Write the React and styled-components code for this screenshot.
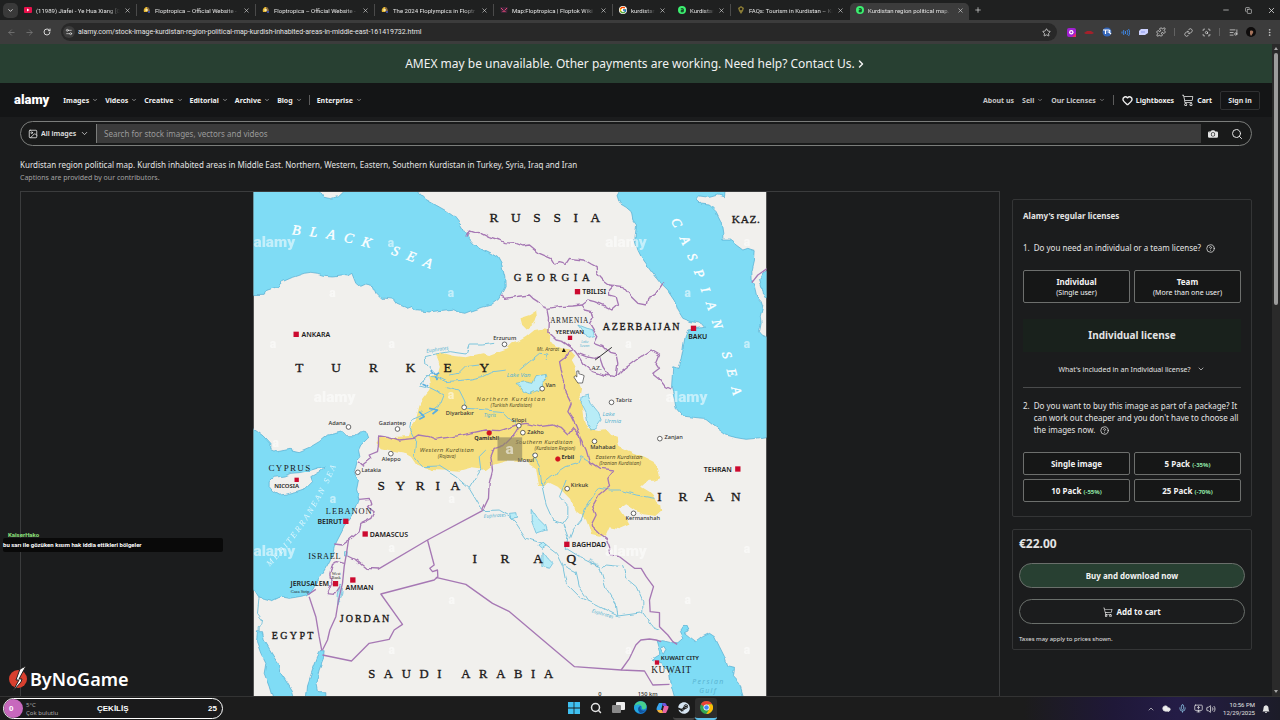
import styled, { createGlobalStyle, css } from 'styled-components';
import {
  ArrowLeft,
  ArrowRight,
  ChevronDown,
  ChevronRight,
  ChevronUp,
  CircleHelp,
  Cloud,
  Copy,
  Heart,
  Image as ImageIcon,
  Link as LinkIcon,
  ListMusic,
  Mic,
  Minus,
  MonitorUp,
  MoreVertical,
  Plus,
  Puzzle,
  RotateCw,
  ScanSearch,
  Search,
  Settings2,
  Star,
  Volume2,
  X,
} from 'lucide-react';
import { BsBellFill, BsCameraFill, BsCart3 } from 'react-icons/bs';
import { FcGoogle } from 'react-icons/fc';
import { FaSteam } from 'react-icons/fa';

const GlobalStyle = createGlobalStyle`
  * {
    box-sizing: border-box;
  }

  body {
    margin: 0;
    background-color: #1b1c1d;
    color: #e4e4e4;
    font-family: 'Noto Sans', 'Open Sans', sans-serif;
    font-size: 7px;
    overflow: hidden;
  }

  button, input, select {
    font: inherit;
    color: inherit;
    background: none;
    border: none;
    padding: 0;
    margin: 0;
    outline: none;
  }

  a {
    color: inherit;
    text-decoration: none;
  }

  svg {
    display: block;
    flex-shrink: 0;
  }
`;

const tabs = [
  { title: '(11989) Jiafei - Ye Hua Xiang [O', icon: 'youtube', line: true },
  { title: 'Floptropica – Official Website -', icon: 'flop', line: true },
  { title: 'Floptropica – Official Website -', icon: 'flop', line: true },
  { title: 'The 2024 Floplympics in Floptr', icon: 'flop', line: true },
  { title: 'Map:Floptropica | Floptok Wiki', icon: 'wiki', line: true },
  { title: 'kurdistan', icon: 'google', small: true },
  { title: 'Kurdistan', icon: 'alamy', small: true, line: true },
  { title: 'FAQs: Tourism in Kurdistan – Ku', icon: 'faq' },
  { title: 'Kurdistan region political map.', icon: 'alamy', active: true },
];

const leftNav = ['Images', 'Videos', 'Creative', 'Editorial', 'Archive', 'Blog'];

const packs = [
  { name: 'Single image' },
  { name: '5 Pack', off: '(-35%)' },
  { name: '10 Pack', off: '(-55%)' },
  { name: '25 Pack', off: '(-70%)' },
];

const seas = [
  // Black Sea
  'M-30,-30 L203,-30 L203,6 L215,22 L235,26 L255,20 L270,6 L270,-30 L497,-30 L497,6 L520,28 L550,45 L580,62 L605,80 L625,105 L640,130 L648,143 L665,162 L690,178 L715,190 L735,202 L748,225 L757,262 L758,290 L745,315 L738,328 L715,345 L690,352 L660,362 L640,370 L620,366 L600,358 L560,362 L530,366 L490,362 L478,350 L465,355 L435,342 L425,328 L400,325 L385,325 L370,310 L362,290 L340,285 L325,292 L310,280 L298,250 L285,258 L265,255 L240,258 L215,256 L195,250 L175,247 L155,250 L120,262 L90,275 L75,290 L40,302 L32,316 L-30,318 Z',
  // Caspian Sea
  'M1112,-20 L1093,15 L1101,40 L1121,52 L1136,65 L1141,90 L1152,105 L1149,130 L1147,150 L1156,180 L1166,200 L1191,235 L1226,280 L1246,300 L1266,330 L1276,360 L1291,385 L1316,395 L1346,400 L1356,412 L1330,416 L1306,420 L1298,440 L1294,460 L1291,480 L1286,505 L1276,535 L1261,530 L1259,560 L1257,595 L1266,625 L1271,655 L1291,678 L1321,682 L1356,685 L1381,705 L1421,735 L1451,743 L1481,748 L1511,745 L1570,735 L1570,445 L1541,440 L1529,435 L1521,425 L1526,400 L1523,380 L1531,350 L1526,335 L1513,320 L1506,290 L1499,275 L1498,245 L1506,210 L1508,182 L1486,175 L1471,180 L1451,165 L1431,150 L1411,150 L1411,130 L1406,95 L1391,65 L1371,45 L1346,42 L1331,28 L1341,18 L1371,22 L1396,15 L1416,20 L1421,-20 Z',
  'M1560,235 L1535,248 L1521,268 L1528,290 L1533,315 L1560,340 Z',
  // Mediterranean
  'M-30,710 L3,715 L15,722 L35,738 L55,760 L55,776 L75,785 L110,778 L140,785 L175,770 L200,755 L225,735 L250,730 L270,725 L285,740 L305,740 L325,725 L340,728 L346,745 L325,765 L318,780 L322,800 L315,810 L310,830 L305,845 L318,870 L312,900 L320,930 L310,955 L295,980 L280,1000 L268,1025 L255,1050 L245,1070 L240,1095 L225,1125 L210,1150 L195,1175 L180,1200 L165,1215 L140,1220 L110,1225 L85,1220 L60,1232 L35,1225 L15,1220 L3,1200 L-30,1190 Z',
  // Gulf of Suez and Aqaba
  'M15,1325 L30,1325 L35,1350 L50,1375 L65,1400 L80,1420 L85,1450 L105,1480 L120,1505 L130,1540 L65,1540 L50,1490 L35,1450 L40,1420 L25,1390 L12,1355 Z',
  'M205,1382 L215,1382 L212,1410 L200,1440 L190,1480 L195,1505 L220,1505 L220,1540 L160,1540 L165,1485 L180,1440 L195,1400 Z',
  // Persian Gulf
  'M1211,1355 L1231,1352 L1256,1358 L1276,1358 L1291,1345 L1281,1325 L1291,1310 L1306,1308 L1312,1320 L1296,1328 L1311,1340 L1331,1355 L1351,1340 L1371,1330 L1386,1340 L1401,1370 L1416,1400 L1426,1430 L1446,1435 L1443,1460 L1461,1480 L1479,1540 L1271,1540 L1256,1485 L1251,1450 L1230,1420 L1196,1408 L1222,1392 Z',
];

const kurdistan = [
  'M550,490 L565,488 L600,497 L640,502 L665,495 L690,490 L710,495 L735,485 L765,475 L780,460 L796,455 L821,440 L846,420 L876,415 L893,420 L889,452 L905,462 L926,475 L951,478 L966,495 L955,510 L966,530 L971,560 L986,595 L981,620 L991,650 L996,690 L1006,715 L1036,720 L1061,718 L1076,735 L1096,740 L1098,765 L1111,775 L1146,790 L1176,800 L1206,815 L1216,835 L1223,865 L1206,872 L1186,872 L1166,890 L1191,905 L1201,915 L1211,935 L1223,945 L1226,965 L1211,978 L1166,972 L1121,943 L1101,958 L1116,980 L1126,995 L1131,1005 L1101,1018 L1071,1012 L1061,1035 L1041,1040 L1016,1035 L1009,1012 L1001,990 L986,975 L966,960 L956,930 L936,910 L916,890 L891,878 L861,888 L856,870 L853,850 L851,835 L836,825 L821,812 L801,815 L760,814 L720,825 L700,840 L660,835 L620,845 L580,842 L540,840 L510,830 L490,822 L475,800 L460,792 L420,785 L385,778 L372,762 L382,735 L410,742 L470,738 L475,715 L490,690 L500,650 L510,625 L530,600 L535,585 L530,560 L560,548 L565,530 L555,505 Z',
  'M801,385 L831,375 L851,362 L853,380 L846,400 L821,420 L806,405 Z',
];

const islands = [
  'M50,875 L65,862 L95,858 L115,850 L140,848 L170,842 L200,833 L218,830 L200,845 L175,860 L180,875 L160,895 L130,905 L100,912 L80,915 L60,902 L50,890 Z',
  'M1233,1365 L1240,1375 L1232,1390 L1224,1376 Z',
];

const lakes = [
  'M791,580 L816,575 L841,580 L851,560 L881,553 L883,565 L866,580 L871,595 L846,605 L831,612 L811,605 L801,592 Z',
  'M989,620 L1006,615 L1016,640 L1036,665 L1046,690 L1031,710 L1016,720 L1006,700 L1001,670 L986,640 Z',
  'M976,405 L1001,415 L1021,420 L1026,440 L1006,445 L991,425 Z',
  'M836,955 L856,985 L876,1005 L881,1020 L851,1030 L836,990 Z',
  'M871,1085 L886,1105 L901,1120 L891,1135 L871,1130 Z',
  'M859,1065 L871,1058 L881,1068 L869,1075 Z',
  'M771,970 L790,968 L792,982 L775,984 Z',
  'M262,1185 L270,1190 L268,1215 L256,1245 L257,1215 Z',
  'M276,1085 L284,1085 L284,1098 L276,1098 Z',
];

const roughBorders = [
  'M640,143 L650,123 L665,128 L685,127 L710,140 L740,150 L755,158 L791,160 L811,168 L831,165 L861,190 L896,205 L906,222 L921,215 L941,220 L951,205 L996,210 L1016,222 L1031,230 L1033,250 L1051,270 L1071,285 L1111,290 L1136,320 L1156,340 L1181,345 L1186,325 L1211,310 L1231,280',
  'M745,318 L760,325 L791,320 L831,315 L841,325 L856,335 L871,350 L886,355 L921,350 L961,348 L986,345 L1006,330 L1026,335 L1061,350 L1081,360 L1098,345 L1091,320 L1071,315 L1071,300 L1086,285',
  'M886,355 L891,380 L889,430 L911,450 L931,455 L961,475 L976,495 L991,520 L1021,545 L1051,555 L1091,560 L1111,540 L1151,510 L1196,480 L1221,495 L1211,520 L1221,535 L1201,550 L1226,570 L1241,590 L1256,597',
  'M986,345 L996,360 L1016,365 L1021,385 L1011,400 L1026,425 L1036,440 L1026,460 L1051,470 L1071,490 L1091,495 L1096,520 L1091,558',
  'M976,490 L1001,500 L1026,505 L1041,500 L1051,530 L1061,545 L1071,560',
  'M961,480 L949,485 L941,500 L921,515 L926,540 L936,570 L936,600 L956,640 L946,665 L956,680 L971,710 L984,745 L1001,780 L1011,815 L1041,835 L1086,840 L1066,865 L1071,890 L1041,915 L1021,950 L1031,975 L1016,1005 L1041,1030 L1061,1045 L1071,1070 L1074,1095 L1101,1100',
  'M320,815 L330,825 L355,805 L350,795 L375,785 L378,765 L378,735 L410,740 L440,750 L485,745 L500,735 L530,740 L550,748 L600,740 L650,730 L700,720 L740,722 L771,712 L791,705 L821,700 L861,710 L901,705 L926,715 L946,735 L961,715 L981,735 L986,770',
  'M800,712 L785,735 L755,765 L725,775 L715,800 L720,840 L710,880 L708,925 L690,962',
  'M320,928 L350,925 L355,940 L345,950 L365,965 L355,985 L325,1000 L320,1025 L290,1050 L270,1065 L245,1062',
  'M285,1098 L310,1110 L340,1135 L380,1137',
  'M275,1120 L255,1115 L240,1120 L232,1155 L238,1180 L224,1214 L245,1216 L262,1190',
];

const straightBorders = [
  'M690,962 L525,1050 L376,1138',
  'M288,1050 L282,1090 L275,1130 L270,1180 L258,1230 L250,1280 L232,1320 L225,1350 L210,1380',
  'M165,1215 L190,1198 M170,1220 L190,1280 L200,1340 L208,1382',
  'M210,1395 L297,1413 L350,1360 L410,1348 L425,1320 L450,1303 L385,1212 L545,1170 L556,1160 L555,1140 L540,1145 L532,1135 L545,1125 L525,1050',
  'M550,1162 L640,1183 L720,1240 L771,1265 L871,1350 L966,1430 L1106,1440 L1176,1443 L1201,1485 L1251,1483',
  'M1106,1440 L1131,1405 L1150,1365 L1165,1350 L1191,1347 L1211,1350 L1226,1355',
  'M1101,1100 L1146,1135 L1166,1135 L1181,1160 L1203,1190 L1191,1230 L1193,1265 L1221,1268 L1221,1310 L1246,1335 L1261,1355 L1274,1363',
  'M1498,278 L1516,255 L1545,235',
];

const rivers = [
  'M725,460 L690,465 L650,465 L640,492 L590,485 L550,492 L518,500 L520,520 L540,545 L500,585 L530,592 L575,615 L565,640 L540,660 L500,680 L475,690 L472,715 L490,750 L485,800 L510,830 L560,828 L610,860 L650,895 L690,962 L740,960 L771,978 L791,1000 L821,1045 L871,1060 L911,1090 L931,1130 L941,1180 L981,1220 L1041,1250 L1096,1278 L1171,1268 L1201,1310 L1221,1318',
  'M520,560 L550,560 L580,575 L640,570 L690,560 L720,545 L760,540 M590,555 L620,550 L640,530 L680,525',
  'M580,590 L620,600 L635,630 L645,655 L700,660 L750,665 L775,690 L790,700',
  'M700,780 L680,800 L685,840 L650,895',
  'M840,790 L861,830 L868,885 L881,945 L901,990 L931,1000 L946,1040 L941,1075 L981,1100 L1041,1130 L1061,1195 L1091,1240 L1096,1278',
  'M868,885 L911,850 L941,830 L976,820 L985,800 L1011,815',
  'M941,870 L921,920 L946,950 L946,980 L931,1000',
  'M951,1045 L961,1020 L986,990 L1001,950 L1031,905 L1041,895 L1071,900 L1101,900 L1151,915 L1206,925',
  'M1051,1135 L1061,1125 L1111,1130 L1121,1165 L1151,1190 L1171,1235 L1171,1268',
  'M931,1125 L971,1145 L981,1190 L1011,1235',
  'M801,540 L831,515 L861,490 L886,492 L881,510',
  'M20,1220 L15,1270 L30,1290 L28,1305 L20,1310 L20,1325',
];

const countries = [
  { text: 'RUSSIA', x: 711, y: 95, size: 40, space: 38 },
  { text: 'KAZ.', x: 1438, y: 100, size: 34, space: 2 },
  { text: 'GEORGIA', x: 784, y: 274, size: 32, space: 14 },
  { text: 'ARMENIA', x: 893, y: 398, size: 22, space: 2 },
  { text: 'AZERBAIJAN', x: 1051, y: 419, size: 30, space: 5 },
  { text: 'AZ.', x: 1016, y: 540, size: 20, space: 0 },
  { text: 'TURKEY', x: 128, y: 545, size: 40, space: 84 },
  { text: 'SYRIA', x: 375, y: 901, size: 40, space: 32 },
  { text: 'IRAQ', x: 660, y: 1119, size: 40, space: 71 },
  { text: 'IRAN', x: 1214, y: 934, size: 40, space: 51 },
  { text: 'SAUDI ARABIA', x: 347, y: 1464, size: 38, space: 26 },
  { text: 'JORDAN', x: 262, y: 1295, size: 30, space: 6 },
  { text: 'EGYPT', x: 58, y: 1347, size: 30, space: 7 },
  { text: 'LEBANON', x: 220, y: 973, size: 25, space: 3 },
  { text: 'ISRAEL', x: 167, y: 1108, size: 25, space: 2 },
  { text: 'CYPRUS', x: 48, y: 842, size: 27, space: 4 },
  { text: 'KUWAIT', x: 1196, y: 1450, size: 28, space: 2 },
];

const capitals = [
  { text: 'ANKARA', x: 147, y: 441, px: 131, py: 433 },
  { text: 'TBILISI', x: 989, y: 313, px: 975, py: 305 },
  { text: 'YEREWAN', x: 909, y: 433, px: 952, py: 443, small: true },
  { text: 'BAKU', x: 1307, y: 446, px: 1323, py: 415 },
  { text: 'NICOSIA', x: 65, y: 894, px: 132, py: 869, small: true },
  { text: 'BEIRUT', x: 195, y: 1002, px: 280, py: 994 },
  { text: 'DAMASCUS', x: 352, y: 1040, px: 338, py: 1032 },
  { text: 'JERUSALEM', x: 114, y: 1188, px: 249, py: 1181 },
  { text: 'AMMAN', x: 279, y: 1199, px: 301, py: 1170 },
  { text: 'BAGHDAD', x: 958, y: 1070, px: 943, py: 1063 },
  { text: 'TEHRAN', x: 1354, y: 845, px: 1456, py: 837 },
  { text: 'KUWAIT CITY', x: 1225, y: 1411, px: 1213, py: 1417, small: true },
];

const towns = [
  { text: 'Erzurum', x: 722, y: 451, px: 756, py: 463 },
  { text: 'Diyarbakır', x: 580, y: 676, px: 635, py: 652 },
  { text: 'Adana', x: 228, y: 706, px: 288, py: 711 },
  { text: 'Gaziantep', x: 379, y: 706, px: 435, py: 717 },
  { text: 'Aleppo', x: 388, y: 814, px: 415, py: 791 },
  { text: 'Latakia', x: 327, y: 845, px: 316, py: 847 },
  { text: 'Van', x: 879, y: 592, px: 869, py: 596 },
  { text: 'Tabriz', x: 1090, y: 637, px: 1077, py: 637 },
  { text: 'Zanjan', x: 1236, y: 746, px: 1222, py: 746 },
  { text: 'Silopi', x: 777, y: 696, px: 799, py: 707 },
  { text: 'Zakho', x: 824, y: 732, px: 811, py: 728 },
  { text: 'Mahabad', x: 1013, y: 778, px: 1026, py: 754 },
  { text: 'Mosul', x: 795, y: 816, px: 848, py: 796 },
  { text: 'Kirkuk', x: 955, y: 890, px: 944, py: 896 },
  { text: 'Kermanshah', x: 1119, y: 991, px: 1143, py: 970 },
  { text: 'Qamishli', x: 665, y: 751, px: 710, py: 729, main: true },
  { text: 'Erbil', x: 927, y: 806, px: 916, py: 807, main: true },
];

const regions = [
  { text: 'Northern Kurdistan', x: 672, y: 633, size: 18, space: 3 },
  { text: '(Turkish Kurdistan)', x: 714, y: 650, size: 15 },
  { text: 'Western Kurdistan', x: 502, y: 786, size: 18, space: 1 },
  { text: '(Rojava)', x: 556, y: 804, size: 15 },
  { text: 'Southern Kurdistan', x: 789, y: 762, size: 18, space: 1 },
  { text: '(Kurdistan Region)', x: 846, y: 781, size: 15 },
  { text: 'Eastern Kurdistan', x: 1029, y: 807, size: 18 },
  { text: '(Iranian Kurdistan)', x: 1040, y: 826, size: 15 },
  { text: 'Mt. Ararat', x: 853, y: 483, size: 15 },
];

const waters = [
  { text: 'Lake Van', x: 763, y: 562, size: 18 },
  { text: 'Lake', x: 1050, y: 679, size: 18 },
  { text: 'Urmia', x: 1056, y: 699, size: 18 },
  { text: 'Lake', x: 986, y: 458, size: 11 },
  { text: 'Sevan', x: 982, y: 470, size: 11 },
  { text: 'Euphrates', x: 522, y: 488, size: 15, turn: -8 },
  { text: 'Euphrates', x: 694, y: 984, size: 15, turn: -4 },
  { text: 'Euphrates', x: 1017, y: 1267, size: 15, turn: 16 },
  { text: 'Tigris', x: 694, y: 682, size: 15 },
  { text: 'Tigris', x: 1005, y: 1112, size: 15, turn: 35 },
  { text: 'Persian', x: 1319, y: 1481, size: 21, space: 4 },
  { text: 'Gulf', x: 1340, y: 1510, size: 21, space: 4 },
];

const watermarks = [
  [3, 172],
  [1058, 172],
  [184, 635],
  [1240, 635],
  [3, 1097],
  [1058, 1097],
];

const smallMarks = [
  [406, 170], [230, 320], [586, 322], [1296, 322], [52, 473], [408, 473], [1118, 473],
  [1474, 473], [586, 628], [232, 938], [588, 938], [408, 1086], [1474, 1090],
  [588, 1242], [1296, 1242], [408, 1392], [1118, 1392], [1474, 1392], [1474, 168], [60, 772],
];

const TabIcon = ({ type }) => {
  if (type === 'google') return <Favicon as={FcGoogle} $round />;
  if (type === 'youtube') {
    return (
      <Favicon viewBox='0 0 8 8'>
        <rect y='1' width='8' height='6' rx='1' fill='#e8124c' />
        <path d='M3 2.6 5.5 4 3 5.4z' fill='#fff' />
      </Favicon>
    );
  }
  if (type === 'alamy') {
    return (
      <Favicon viewBox='0 0 8 8'>
        <circle cx='4' cy='4' r='4' fill='#3cf070' />
        <path d='M2.8 2.8h2.4v3H3.2V4.4h2' fill='none' stroke='#10301b' />
      </Favicon>
    );
  }
  if (type === 'wiki') {
    return (
      <Favicon viewBox='0 0 8 8'>
        <path d='M0 1h8L7 7H1z' fill='#3c2438' />
        <path d='M1 2 3 4M7 2 5 4M3 6V5h2v1' fill='none' stroke='#e04672' />
      </Favicon>
    );
  }
  if (type === 'faq') {
    return (
      <Favicon viewBox='0 0 8 8'>
        <path d='M1 2 4 0l3 2-1 3-2 3-2-3z' fill='#8c7d36' />
        <circle cx='4' cy='3' r='1.3' fill='#262217' />
      </Favicon>
    );
  }
  return (
    <Favicon viewBox='0 0 8 8'>
      <path d='M1 6C0 3 2 1 4 1v5z' fill='#e3b52e' />
      <path d='M4 1c2 0 3 2 3 5H4z' fill='#8d6c3e' />
      <circle cx='3.6' cy='4' r='1.3' fill='#f5e9ad' />
      <path d='M5 5h2v2H5z' fill='#3c4e9b' />
    </Favicon>
  );
};

const BrowserTop = () => (
  <>
    <TabStrip>
      <TabSearch aria-label='Search tabs'>
        <ChevronDown size={7} strokeWidth={3} />
      </TabSearch>
      {tabs.map((tab, i) => (
        <Tab key={i} $small={tab.small} $active={tab.active} $line={tab.line}>
          <TabIcon type={tab.icon} />
          <TabTitle $small={tab.small}>{tab.title}</TabTitle>
          <IconButton aria-label='Close tab'>
            <X size={7} />
          </IconButton>
        </Tab>
      ))}
      <NewTab aria-label='New tab'>
        <Plus size={8} />
      </NewTab>
      <WindowButtons>
        <IconButton aria-label='Minimize'>
          <Minus size={8} />
        </IconButton>
        <IconButton aria-label='Restore'>
          <Copy size={7} />
        </IconButton>
        <IconButton aria-label='Close'>
          <X size={9} />
        </IconButton>
      </WindowButtons>
    </TabStrip>
    <Toolbar>
      <ToolCell $dim aria-label='Back'>
        <ArrowLeft size={9} />
      </ToolCell>
      <ToolCell $dim aria-label='Forward'>
        <ArrowRight size={9} />
      </ToolCell>
      <ToolCell aria-label='Reload'>
        <RotateCw size={8} strokeWidth={3} />
      </ToolCell>
      <AddressBar>
        <SiteInfo>
          <Settings2 size={8} />
        </SiteInfo>
        <AddressInput
          aria-label='Address'
          defaultValue='alamy.com/stock-image-kurdistan-region-political-map-kurdish-inhabited-areas-in-middle-east-161419732.html'
        />
        <Star size={9} />
      </AddressBar>
      <ToolCell aria-label='Extension'>
        <svg width='9' height='9' viewBox='0 0 9 9'>
          <rect width='9' height='9' rx='2' fill='#a020d0' />
          <path d='M5 9h4V5z' fill='#e62b6a' />
          <circle cx='4.3' cy='4.3' r='2.2' fill='#fff' />
          <circle cx='4.3' cy='4.3' r='1' fill='#a020d0' />
        </svg>
      </ToolCell>
      <ToolCell aria-label='Extension'>
        <svg width='10' height='5' viewBox='0 0 10 5'>
          <path d='M0 3 3 1h4l3 2-2 1H2z' fill='#a3202b' />
        </svg>
      </ToolCell>
      <ToolCell aria-label='Extension'>
        <svg width='10' height='10' viewBox='0 0 10 10'>
          <circle cx='5' cy='5' r='4.5' fill='#3365b8' />
          <path d='M1 3h5M3.5 3v4M5 3h2l1 1-1 1H5.5M7 5l2 2' fill='none' stroke='#fff' strokeWidth='1.2' />
        </svg>
      </ToolCell>
      <ToolCell aria-label='Extension'>
        <svg width='9' height='9' viewBox='0 0 9 9' fill='none' stroke='#3f86e0'>
          <path d='M1 3.5v2M2.7 2v5M4.5 3v3M6 2c1 1.5 1 3.5 0 5M7.5 1c1.5 2 1.5 5 0 7' />
        </svg>
      </ToolCell>
      <ToolCell aria-label='Extension'>
        <svg width='9' height='8' viewBox='0 0 9 8'>
          <path d='M2 1h7v4L6 7H0V3z' fill='#ccd2ff' />
          <path d='M2.5 4h4' stroke='#5262d6' strokeDasharray='1 1' />
        </svg>
      </ToolCell>
      <ToolCell aria-label='Extensions'>
        <Puzzle size={10} />
      </ToolCell>
      <ToolLine />
      <ToolCell aria-label='Copy link'>
        <LinkIcon size={9} />
      </ToolCell>
      <ToolCell aria-label='Search with lens'>
        <ScanSearch size={9} />
      </ToolCell>
      <ToolLine />
      <ToolCell aria-label='Media'>
        <ListMusic size={9} />
      </ToolCell>
      <ToolCell aria-label='Profile'>
        <svg width='10' height='10' viewBox='0 0 10 10'>
          <circle cx='5' cy='5' r='5' fill='#0e0c0c' />
          <path d='M4 4c2-1 4 0 3 2L5 9 4 7z' fill='#a5735b' />
        </svg>
      </ToolCell>
      <ToolCell aria-label='Menu'>
        <MoreVertical size={9} />
      </ToolCell>
    </Toolbar>
  </>
);

const SiteHeader = () => (
  <>
    <Banner href='#contact'>
      AMEX may be unavailable. Other payments are working. Need help? Contact Us.
      <ChevronRight size={12} strokeWidth={3} />
    </Banner>
    <NavBar>
      <Logo href='#home'>alamy</Logo>
      <NavGroup>
        {leftNav.map((item) => (
          <NavItem href='#nav' key={item}>
            {item}
            <ChevronDown size={6} />
          </NavItem>
        ))}
        <NavLine />
        <NavItem href='#nav'>
          Enterprise
          <ChevronDown size={6} />
        </NavItem>
      </NavGroup>
      <NavGroup $right>
        <NavItem href='#nav' $dim>
          About us
        </NavItem>
        <NavItem href='#nav' $dim>
          Sell
          <ChevronDown size={6} />
        </NavItem>
        <NavItem href='#nav' $dim>
          Our Licenses
          <ChevronDown size={6} />
        </NavItem>
        <NavLine />
        <NavItem href='#nav'>
          <Heart size={11} strokeWidth={3} />
          Lightboxes
        </NavItem>
        <NavItem href='#nav'>
          <BsCart3 size={12} />
          Cart
        </NavItem>
        <SignIn>Sign in</SignIn>
      </NavGroup>
    </NavBar>
    <SearchBar>
      <TypePicker>
        <ImageIcon size={10} />
        <TypeSelect aria-label='Type of image'>
          <option>All images</option>
        </TypeSelect>
        <ChevronDown size={9} />
      </TypePicker>
      <SearchInput
        aria-label='Search'
        placeholder='Search for stock images, vectors and videos'
      />
      <SearchButton aria-label='Search by image'>
        <BsCameraFill size={10} />
      </SearchButton>
      <SearchButton aria-label='Search'>
        <Search size={12} />
      </SearchButton>
    </SearchBar>
  </>
);

const MapDrawing = () => (
  <MapSvg viewBox='3 6 1539 1512' preserveAspectRatio='xMidYMin meet'>
    <defs>
      <filter id='coast' x='-5%' y='-5%' width='110%' height='110%'>
        <feTurbulence type='fractalNoise' baseFrequency='0.04' numOctaves='1' seed='4' />
        <feDisplacementMap in='SourceGraphic' scale='14' xChannelSelector='R' yChannelSelector='G' />
      </filter>
      <clipPath id='sheet'>
        <rect x='3' y='6' width='1539' height='1512' />
      </clipPath>
      <path id='blackSea' d='M118,133 Q350,150 600,266' />
      <path id='caspianSea' d='M1255,92 Q1375,330 1455,670' />
      <path id='medSea' d='M52,1130 Q200,980 275,765' />
    </defs>
    <g clipPath='url(#sheet)'>
      <rect x='3' y='6' width='1539' height='1512' fill='#f1f0ed' />
      <g filter='url(#coast)' strokeLinejoin='round'>
        <g fill='#7fdcf5' stroke='#4fa9cf' strokeWidth='2'>
          {seas.map((d) => (
            <path key={d} d={d} />
          ))}
        </g>
        {islands.map((d) => (
          <path key={d} d={d} fill='#f1f0ed' stroke='#4fa9cf' strokeWidth='2' />
        ))}
        {kurdistan.map((d) => (
          <path key={d} d={d} fill='#f6e081' />
        ))}
        <g fill='none' stroke='#7cc4dc' strokeWidth='3'>
          {rivers.map((d) => (
            <path key={d} d={d} />
          ))}
        </g>
        <path
          d='M535,540 550,555 560,548 M545,560 555,570 M510,580 530,588 M500,665 515,680 500,688 M530,655 555,660 540,672'
          fill='none'
          stroke='#5aaee0'
          strokeWidth='5'
        />
        <g fill='#b8ecf7' stroke='#5ab4d4' strokeWidth='2'>
          {lakes.map((d) => (
            <path key={d} d={d} />
          ))}
        </g>
        <g fill='none' stroke='#a678b4' strokeWidth='4'>
          {roughBorders.map((d) => (
            <path key={d} d={d} />
          ))}
        </g>
      </g>
      <g fill='none' stroke='#a678b4' strokeWidth='4' strokeLinejoin='round'>
        {straightBorders.map((d) => (
          <path key={d} d={d} />
        ))}
      </g>
      <path d='M1028,510 L1078,472' stroke='#333' strokeWidth='3' />

      {watermarks.map(([x, y]) => (
        <Watermark key={`${x}-${y}`} x={x} y={y} $size={46}>
          alamy
        </Watermark>
      ))}
      {smallMarks.map(([x, y]) => (
        <Watermark key={`${x}-${y}`} x={x} y={y} $size={36}>
          a
        </Watermark>
      ))}

      <SeaName $size={42} $space={27}>
        <textPath href='#blackSea'>BLACK SEA</textPath>
      </SeaName>
      <SeaName $size={40} $space={32}>
        <textPath href='#caspianSea'>CASPIAN SEA</textPath>
      </SeaName>
      <SeaName $size={25} $space={7} $faint>
        <textPath href='#medSea'>MEDITERRANEAN SEA</textPath>
      </SeaName>

      {countries.map((c) => (
        <Country key={c.text} x={c.x} y={c.y} $size={c.size} $space={c.space}>
          {c.text}
        </Country>
      ))}
      <Country x='238' y='1154' $size={13}>West</Country>
      <Country x='237' y='1167' $size={13}>Bank</Country>
      <Country x='115' y='1208' $size={13}>Gaza Strip</Country>
      {waters.map((w, i) => (
        <WaterName
          key={i}
          x={w.x}
          y={w.y}
          $size={w.size}
          $space={w.space}
          transform={w.turn ? `rotate(${w.turn} ${w.x} ${w.y})` : undefined}
        >
          {w.text}
        </WaterName>
      ))}
      {regions.map((r) => (
        <Region key={r.text} x={r.x} y={r.y} $size={r.size} $space={r.space}>
          {r.text}
        </Region>
      ))}
      <path d='M934,474 l6,12 h-12 z' fill='#111' />
      {towns.map((t) => (
        <g key={t.text}>
          <circle
            cx={t.px}
            cy={t.py}
            r='7'
            fill={t.main ? '#d2141e' : '#fff'}
            stroke={t.main ? '#d2141e' : '#222'}
            strokeWidth='2'
          />
          <Town x={t.x} y={t.y} $bold={t.main}>
            {t.text}
          </Town>
        </g>
      ))}
      {capitals.map((c) => (
        <g key={c.text}>
          <rect
            x={c.px - (c.small ? 6 : 8)}
            y={c.py - (c.small ? 6 : 8)}
            width={c.small ? 13 : 16}
            height={c.small ? 13 : 16}
            fill='#cc0a2f'
          />
          <Capital x={c.x} y={c.y} $small={c.small}>
            {c.text}
          </Capital>
        </g>
      ))}
      <Town x='1037' y='1519'>0</Town>
      <Town x='1156' y='1519'>150 km</Town>
      <rect x='735' y='742' width='74' height='70' fill='#8d8562' opacity='0.65' />
      <Watermark x='759' y='792' $size={46}>
        a
      </Watermark>
      <path
        d='M973,543 v18 l-5,-4 -4,4 12,18 h14 l5,-22 -6,-3 -5,-1 -5,-2 v-8 z'
        fill='#fff'
        stroke='#333'
        strokeWidth='2'
      />
    </g>
  </MapSvg>
);

const Sidebar = () => (
  <Side>
    <Card>
      <CardHeading>Alamy's regular licenses</CardHeading>
      <Question>
        <span>1.</span>
        <span>
          Do you need an individual or a team license? <HelpIcon size={9} />
        </span>
      </Question>
      <Options>
        <Option $tall>
          Individual
          <small>(Single user)</small>
        </Option>
        <Option $tall>
          Team
          <small>(More than one user)</small>
        </Option>
      </Options>
      <LicenseName>Individual license</LicenseName>
      <Included>
        What's included in an Individual license?
        <ChevronDown size={8} />
      </Included>
      <Divider />
      <Question>
        <span>2.</span>
        <span>
          Do you want to buy this image as part of a package? It can work out
          cheaper and you don't have to choose all the images now.{' '}
          <HelpIcon size={9} />
        </span>
      </Question>
      <Options>
        {packs.map((pack) => (
          <Option key={pack.name}>
            <span>
              {pack.name} {pack.off && <Discount>{pack.off}</Discount>}
            </span>
          </Option>
        ))}
      </Options>
    </Card>
    <Card $price>
      <Price>€22.00</Price>
      <PillButton $green>Buy and download now</PillButton>
      <PillButton>
        <BsCart3 size={10} />
        Add to cart
      </PillButton>
      <Taxes>Taxes may apply to prices shown.</Taxes>
    </Card>
  </Side>
);

const TaskIcons = () => (
  <TaskGroup>
    <TaskButton aria-label='Start'>
      <svg width='12' height='12' viewBox='0 0 12 12' fill='#3fc0f0'>
        <path d='M0 0h5.6v5.6H0zM6.4 0H12v5.6H6.4zM0 6.4h5.6V12H0zM6.4 6.4H12V12H6.4z' />
      </svg>
    </TaskButton>
    <TaskButton aria-label='Search'>
      <Search size={12} strokeWidth={3} />
    </TaskButton>
    <TaskButton aria-label='Task view'>
      <svg width='13' height='12' viewBox='0 0 13 12'>
        <rect x='4' y='0' width='9' height='8' rx='1' fill='#eee' />
        <rect x='0' y='3' width='9' height='8' rx='1' fill='#888' />
      </svg>
    </TaskButton>
    <TaskButton aria-label='Edge'>
      <svg width='13' height='13' viewBox='0 0 13 13'>
        <circle cx='6.5' cy='6.5' r='6.5' fill='#1780d8' />
        <path d='M0 6C1 1 6-1 10 1c3 2 3 6 1 7-2 1-4 0-3-2C6 3 2 3 0 6z' fill='#46cf8f' />
        <path d='M0 6C2 3 6 3 7 5c-3 0-4 4-1 7C2 12 0 9 0 6z' fill='#24a8df' />
        <path d='M7 5c-2 3 1 6 5 4-1 2-4 3-6 3-3-3-2-7 1-7z' fill='#14549c' />
      </svg>
    </TaskButton>
    <TaskButton aria-label='Copilot'>
      <svg width='13' height='12' viewBox='0 0 13 12'>
        <path d='M3 1h4L5 8H1Q0 8 1 5z' fill='#38a5ee' />
        <path d='M6 1h3q1 0 2 3H7z' fill='#6c55dc' />
        <path d='M8 4h4q1 0 0 3l-2 4H6z' fill='#e865a4' />
        <path d='M1 8h5l1 3H4Q2 11 1 8z' fill='#f1b43d' />
      </svg>
    </TaskButton>
    <TaskButton aria-label='Steam' $running>
      <FaSteam size={12} color='#d7e5f2' />
    </TaskButton>
    <TaskButton aria-label='Chrome' $running $focus>
      <svg width='13' height='13' viewBox='0 0 13 13'>
        <circle cx='6.5' cy='6.5' r='6.5' fill='#34a853' />
        <path d='M.9 3.2A6.5 6.5 0 0 1 12.1 3.2H6.5v4z' fill='#ea4335' />
        <path d='M12.1 3.2A6.5 6.5 0 0 1 6.3 13L9.4 8 8 3.2z' fill='#fbbc05' />
        <circle cx='6.5' cy='6.5' r='3' fill='#fff' />
        <circle cx='6.5' cy='6.5' r='2.3' fill='#4285f4' />
      </svg>
    </TaskButton>
  </TaskGroup>
);

const Overlay = () => (
  <OverlayBox>
    <ChatName>KaiserHako</ChatName>
    <ChatText>bu sarı ile gözüken kısım hak iddia ettikleri bölgeler</ChatText>
    <Sponsor>
      <svg width='18' height='26' viewBox='0 0 18 26'>
        <circle cx='9' cy='13' r='9' fill='#d8402f' />
        <path d='M17 0 11 3 7 14h3L4 25l8-9 1-3h-3z' fill='#fff' stroke='#222' />
      </svg>
      ByNoGame
    </Sponsor>
    <Raffle>
      <RaffleBall>0</RaffleBall>
      <Weather>
        <span>5°C</span>
        <span>Çok bulutlu</span>
      </Weather>
      <RaffleTitle>ÇEKİLİŞ</RaffleTitle>
      <span>25</span>
    </Raffle>
  </OverlayBox>
);

const App = () => {
  return (
    <Screen>
      <GlobalStyle />
      <BrowserTop />
      <Viewport>
        <Page>
          <SiteHeader />
          <Caption>
            <Title>
              Kurdistan region political map. Kurdish inhabited areas in Middle
              East. Northern, Western, Eastern, Southern Kurdistan in Turkey,
              Syria, Iraq and Iran
            </Title>
            <Contributors>Captions are provided by our contributors.</Contributors>
          </Caption>
          <Content>
            <Stage>
              <MapDrawing />
            </Stage>
            <Sidebar />
          </Content>
        </Page>
        <Scrollbar>
          <ScrollArrow />
          <ScrollThumb />
          <ScrollArrow $down />
        </Scrollbar>
      </Viewport>
      <Taskbar>
        <span />
        <TaskIcons />
        <Tray>
          <ChevronUp size={8} />
          <Cloud size={9} fill='#eee' />
          <Mic size={9} color='#8fc6e6' />
          <TrayPair>
            <MonitorUp size={9} />
            <Volume2 size={10} />
          </TrayPair>
          <Clock>
            <span>10:56 PM</span>
            <span>12/29/2025</span>
          </Clock>
          <BsBellFill size={8} />
        </Tray>
      </Taskbar>
      <Overlay />
    </Screen>
  );
};

export default App;

const Screen = styled.div`
  position: relative;
  height: 100vh;
  display: flex;
  flex-direction: column;
`;

const TabStrip = styled.div`
  height: 20px;
  display: flex;
  align-items: center;
  background-color: #1f2020;
  padding-left: 3px;
`;

const TabSearch = styled.button`
  width: 15px;
  height: 15px;
  border-radius: 5px;
  background-color: #393939;
  display: grid;
  place-items: center;
`;

const Tab = styled.div`
  flex: 0 1 ${({ $small }) => ($small ? '59px' : '119px')};
  min-width: 0;
  height: 12px;
  padding: 0 5px 0 6px;
  display: flex;
  align-items: center;
  gap: 4px;
  font-family: Roboto, sans-serif;
  font-size: 6px;
  border-right: 1px solid ${({ $line }) => ($line ? '#4a4a4a' : 'transparent')};
  ${({ $active }) =>
    $active &&
    css`
      align-self: flex-end;
      height: 17px;
      padding-bottom: 3px;
      border-right: none;
      background-color: #3c3c3c;
      border-radius: 5px 5px 0 0;
    `}
`;

const Favicon = styled.svg`
  width: 8px;
  height: 8px;
  ${({ $round }) =>
    $round &&
    css`
      background-color: #fff;
      border-radius: 50%;
    `}
`;

const TabTitle = styled.span`
  flex: 1;
  min-width: 0;
  overflow: hidden;
  white-space: nowrap;
  mask-image: linear-gradient(90deg, #000 ${({ $small }) => ($small ? '60%' : '85%')}, transparent);
`;

const IconButton = styled.button`
  display: grid;
  place-items: center;
`;

const NewTab = styled(IconButton)`
  width: 18px;
`;

const WindowButtons = styled.div`
  margin-left: auto;
  padding-right: 4px;
  display: flex;
  gap: 15px;
`;

const Toolbar = styled.div`
  height: 24px;
  display: flex;
  align-items: center;
  background-color: #3c3c3c;
  padding: 0 2px;
`;

const ToolCell = styled.button`
  width: 18px;
  height: 18px;
  display: grid;
  place-items: center;
  color: ${({ $dim }) => ($dim ? '#7c7c7c' : '#d6d6d6')};
`;

const ToolLine = styled.span`
  width: 1px;
  height: 8px;
  margin: 0 4px;
  background-color: #626262;
`;

const AddressBar = styled.div`
  flex: 1;
  height: 18px;
  margin: 0 5px;
  padding: 0 6px 0 2px;
  border-radius: 9px;
  background-color: #282828;
  display: flex;
  align-items: center;
  gap: 3px;
`;

const SiteInfo = styled.span`
  width: 12px;
  height: 12px;
  border-radius: 50%;
  background-color: #3c3c3c;
  display: grid;
  place-items: center;
`;

const AddressInput = styled.input`
  flex: 1;
  min-width: 0;
  font-family: Roboto, sans-serif;
  font-size: 7px;
`;

const Viewport = styled.div`
  flex: 1;
  min-height: 0;
  display: flex;
`;

const Page = styled.main`
  flex: 1;
  min-width: 0;
  display: flex;
  flex-direction: column;
`;

const Banner = styled.a`
  height: 39px;
  display: flex;
  align-items: center;
  justify-content: center;
  background-color: #284032;
  font-size: 12px;
  color: #f1f1f1;
`;

const NavBar = styled.nav`
  height: 34px;
  padding: 0 12px 0 14px;
  display: flex;
  align-items: center;
  gap: 14px;
  background-color: #141516;
`;

const Logo = styled.a`
  font-family: Roboto, 'Liberation Sans', sans-serif;
  font-weight: 900;
  font-size: 13px;
  line-height: 20px;
  color: #fff;
`;

const NavGroup = styled.div`
  display: flex;
  align-items: center;
  gap: ${({ $right }) => ($right ? '8px' : '7px')};
  margin-left: ${({ $right }) => ($right ? 'auto' : '0')};
`;

const NavItem = styled.a`
  display: flex;
  align-items: center;
  gap: 3px;
  font-size: 7px;
  font-weight: bold;
  color: ${({ $dim }) => ($dim ? '#c6c6c6' : '#f0f0f0')};
`;

const NavLine = styled.span`
  width: 1px;
  height: 10px;
  background-color: #5c5c5c;
`;

const SignIn = styled.button`
  width: 40px;
  height: 19px;
  border: 1px solid #303132;
  border-radius: 2px;
  font-weight: bold;
`;

const SearchBar = styled.form`
  height: 25px;
  margin: 4px 20px 0;
  padding: 2px 2px 2px 0;
  display: flex;
  border: 1px solid #7b7d7b;
  border-radius: 13px;
  background-color: #191a1a;
`;

const TypePicker = styled.label`
  padding: 0 7px;
  display: flex;
  align-items: center;
  gap: 3px;
  border-right: 1px solid #7b7d7b;
`;

const TypeSelect = styled.select`
  appearance: none;
  font-weight: 600;
`;

const SearchInput = styled.input`
  flex: 1;
  padding-left: 7px;
  background-color: #3b3b3b;
  font-size: 8px;

  &::placeholder {
    color: #9a9a9a;
  }
`;

const SearchButton = styled.button`
  width: 24px;
  display: grid;
  place-items: center;
`;

const Caption = styled.header`
  padding: 12px 20px 6px;
`;

const Title = styled.h1`
  margin: 0;
  font-size: 8px;
  font-weight: normal;
  line-height: 13px;
`;

const Contributors = styled.p`
  margin: 0;
  font-size: 7px;
  line-height: 14px;
  color: #a3a3a3;
`;

const Content = styled.div`
  flex: 1;
  min-height: 0;
  padding: 0 20px;
  display: grid;
  grid-template-columns: 1fr 240px;
  grid-template-rows: minmax(0, 1fr);
  gap: 12px;
`;

const Stage = styled.div`
  border: 1px solid #3b3c3d;
  border-bottom: none;
`;

const MapSvg = styled.svg`
  width: 100%;
  height: 100%;
`;

const Country = styled.text`
  font-family: 'Liberation Serif', serif;
  font-size: ${({ $size }) => $size}px;
  letter-spacing: ${({ $space }) => $space || 0}px;
  fill: #1c1a1a;
  stroke: #1c1a1a;
  stroke-width: ${({ $size }) => ($size > 28 ? 1 : 0)}px;
`;

const SeaName = styled(Country)`
  font-style: italic;
  fill: #fff;
  stroke: #fff;
  opacity: ${({ $faint }) => ($faint ? 0.75 : 1)};
`;

const Capital = styled.text`
  font-size: ${({ $small }) => ($small ? 18 : 21)}px;
  font-weight: 600;
  fill: #1c1a1a;
`;

const Town = styled.text`
  font-size: 17px;
  font-weight: ${({ $bold }) => ($bold ? 'bold' : '500')};
  fill: #333;
`;

const Region = styled.text`
  font-size: ${({ $size }) => $size}px;
  font-style: italic;
  letter-spacing: ${({ $space }) => $space || 0}px;
  fill: #5b522b;
`;

const WaterName = styled(Region)`
  fill: #59b4d2;
`;

const Watermark = styled.text`
  font-family: Roboto, 'Liberation Sans', sans-serif;
  font-size: ${({ $size }) => $size}px;
  font-weight: 900;
  fill: #fff;
  opacity: 0.55;
`;

const Side = styled.aside`
  padding-top: 8px;
`;

const Card = styled.section`
  padding: ${({ $price }) => ($price ? '6px' : '10px 10px 14px')};
  margin-bottom: 12px;
  border: 1px solid #343536;
  border-radius: 2px;
`;

const CardHeading = styled.h2`
  margin: 0 0 20px;
  font-size: 8px;
  line-height: 12px;
`;

const Question = styled.div`
  display: flex;
  gap: 4px;
  font-size: 8px;
  line-height: 12px;
`;

const HelpIcon = styled(CircleHelp)`
  display: inline-block;
  vertical-align: middle;
  margin-left: 3px;
`;

const Options = styled.div`
  margin-top: 16px;
  display: grid;
  grid-template-columns: 1fr 1fr;
  gap: 4px;
`;

const Option = styled.button`
  height: ${({ $tall }) => ($tall ? '33px' : '23px')};
  display: flex;
  flex-direction: column;
  align-items: center;
  justify-content: center;
  border: 1px solid #6d6f6d;
  border-radius: 2px;
  background-color: #161717;
  font-size: 8px;
  font-weight: bold;
  line-height: 11px;
  color: #f3f3f3;

  small {
    font-size: 7px;
    font-weight: normal;
  }
`;

const Discount = styled.span`
  font-size: 6px;
  line-height: 6px;
  color: #8fe3a5;
`;

const LicenseName = styled.div`
  margin-top: 16px;
  background-color: #19211c;
  font-size: 10px;
  font-weight: bold;
  line-height: 33px;
  text-align: center;
`;

const Included = styled.button`
  width: 100%;
  height: 12px;
  margin: 11px 0 12px;
  display: flex;
  align-items: center;
  justify-content: center;
  gap: 7px;
`;

const Divider = styled.hr`
  margin: 0 0 12px;
  border: none;
  border-top: 1px solid #4a4b4c;
`;

const Price = styled.div`
  font-size: 12px;
  font-weight: bold;
  line-height: 16px;
  margin-bottom: 11px;
`;

const PillButton = styled.button`
  width: 100%;
  height: 25px;
  margin-bottom: 11px;
  display: flex;
  align-items: center;
  justify-content: center;
  gap: 3px;
  border: 1px solid #6a6f6b;
  border-radius: 13px;
  background-color: ${({ $green }) => ($green ? '#284032' : 'transparent')};
  font-size: 8px;
  font-weight: bold;
  color: #f3f3f3;
`;

const Taxes = styled.p`
  margin: 0;
  font-size: 6px;
  line-height: 8px;
`;

const Scrollbar = styled.div`
  width: 8px;
  padding: 3px 0;
  display: flex;
  flex-direction: column;
  align-items: center;
  background-color: #2a2a2a;
`;

const ScrollArrow = styled.span`
  border: 2px solid transparent;
  border-bottom: 3px solid #a6a6a6;
  border-top: none;
  ${({ $down }) =>
    $down &&
    css`
      margin-top: auto;
      transform: rotate(180deg);
    `}
`;

const ScrollThumb = styled.span`
  width: 4px;
  height: 39%;
  margin-top: 3px;
  border-radius: 2px;
  background-color: #9c9c9c;
`;

const Taskbar = styled.footer`
  height: 24px;
  display: grid;
  grid-template-columns: 1fr auto 1fr;
  align-items: center;
  border-top: 1px solid #333;
  background: linear-gradient(90deg, #1c1c1c 80%, #1f1838 87%, #241c46 92%, #1c1c28);
`;

const TaskGroup = styled.div`
  display: flex;
`;

const TaskButton = styled.button`
  width: 22px;
  height: 22px;
  display: grid;
  place-items: center;
  border-radius: 3px;
  background-color: ${({ $focus }) => ($focus ? '#2d2d2d' : 'transparent')};
  border-bottom: 2px solid
    ${({ $running, $focus }) => ($focus ? '#5ec1ea' : $running ? '#444' : 'transparent')};
`;

const Tray = styled.div`
  padding-right: 10px;
  display: flex;
  align-items: center;
  justify-content: flex-end;
  gap: 7px;
`;

const TrayPair = styled.span`
  display: flex;
  gap: 3px;
`;

const Clock = styled.span`
  display: flex;
  flex-direction: column;
  font-family: Roboto, sans-serif;
  font-size: 6px;
  line-height: 8px;
  text-align: right;
`;

const OverlayBox = styled.div`
  position: absolute;
  left: 3px;
  bottom: 1px;
  width: 220px;
  font-family: Roboto, sans-serif;
`;

const ChatName = styled.div`
  padding-left: 5px;
  font-size: 6px;
  font-weight: bold;
  line-height: 7px;
  color: #8ee27c;
`;

const ChatText = styled.div`
  height: 14px;
  margin-bottom: 114px;
  border-radius: 2px;
  background-color: #090909;
  font-size: 6px;
  font-weight: bold;
  line-height: 14px;
  color: #fff;
`;

const Sponsor = styled.div`
  padding-left: 6px;
  margin-bottom: 6px;
  display: flex;
  align-items: center;
  gap: 3px;
  font-family: 'Noto Sans', sans-serif;
  font-size: 18px;
  font-weight: 600;
  line-height: 26px;
  color: #fff;
`;

const Raffle = styled.div`
  height: 21px;
  padding-right: 5px;
  display: flex;
  align-items: center;
  gap: 3px;
  border: 1px solid #fff;
  border-radius: 11px;
  background-color: #1a1a1b;
  font-family: 'Liberation Sans', sans-serif;
  font-size: 8px;
  font-weight: bold;
  color: #fff;
`;

const RaffleBall = styled.span`
  width: 19px;
  height: 19px;
  border-radius: 50%;
  background-color: #c768bd;
  line-height: 19px;
  padding-left: 5px;
`;

const Weather = styled.span`
  width: 68px;
  display: flex;
  flex-direction: column;
  font-family: 'Noto Sans', sans-serif;
  font-size: 6px;
  font-weight: normal;
  line-height: 8px;
  color: #a9a9a9;
`;

const RaffleTitle = styled.span`
  flex: 1;
`;
